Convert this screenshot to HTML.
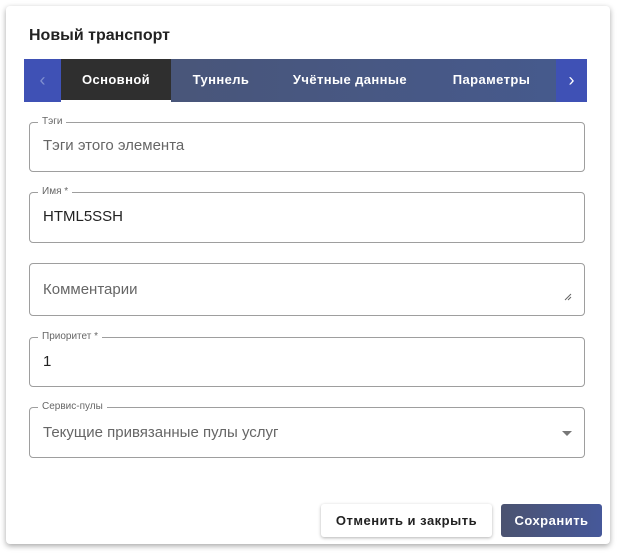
<!DOCTYPE html><html><head><style>
body{margin:0;width:623px;height:558px;background:#fff;font-family:"Liberation Sans",sans-serif;position:relative;overflow:hidden}
.card{position:absolute;left:6px;top:6px;width:604px;height:538px;background:#fff;border-radius:4px;box-shadow:0 2px 6px rgba(0,0,0,.35)}
.t{position:absolute;left:29px;top:27px;font-size:16px;font-weight:bold;color:#222}
.bar{position:absolute;left:24px;top:59px;width:563px;height:43px;background:linear-gradient(90deg,#4a5472,#465a8e)}
.arr{position:absolute;top:0;width:37px;height:43px;background:#3f51b5;color:#fff;font-size:18px;text-align:center;line-height:42px}
.tab{position:absolute;top:0;height:43px;line-height:42px;color:#fff;font-size:13px;font-weight:bold;text-align:center;letter-spacing:.4px}
.f{position:absolute;left:29px;width:556px;border:1px solid #9e9e9e;border-radius:4px;box-sizing:border-box}
.lb{position:absolute;left:8px;top:-7px;background:#fff;padding:0 4px;font-size:10px;color:#666}
.v{position:absolute;left:13px;font-size:15px;color:#666}
.btn{position:absolute;top:504px;height:33px;line-height:33px;text-align:center;font-size:13px;font-weight:bold;border-radius:3px;letter-spacing:.5px}
</style></head><body><div class="card"></div>
<div class="t">Новый транспорт</div>
<div class="bar">
<div class="arr" style="left:0;color:#8090d0">‹</div>
<div class="tab" style="left:37px;width:110px;background:#2f2f2f;border-bottom:2px solid #fff;height:41px">Основной</div>
<div class="tab" style="left:147px;width:100px">Туннель</div>
<div class="tab" style="left:247px;width:158px">Учётные данные</div>
<div class="tab" style="left:405px;width:125px">Параметры</div>
<div class="arr" style="left:532px;width:31px">›</div>
</div>
<div class="f" style="top:122px;height:50px"><span class="lb">Тэги</span><span class="v" style="top:14px">Тэги этого элемента</span></div>
<div class="f" style="top:192px;height:51px"><span class="lb">Имя *</span><span class="v" style="top:15px;color:#222">HTML5SSH</span></div>
<div class="f" style="top:263px;height:53px"><span class="v" style="top:17px">Комментарии</span><svg style="position:absolute;right:12px;bottom:14px" width="8" height="8"><path d="M1 7L7 1M4 7L7 4" stroke="#666" stroke-width="1"/></svg></div>
<div class="f" style="top:337px;height:50px"><span class="lb">Приоритет *</span><span class="v" style="top:15px;color:#222">1</span></div>
<div class="f" style="top:407px;height:51px"><span class="lb">Сервис-пулы</span><span class="v" style="top:16px">Текущие привязанные пулы услуг</span><span style="position:absolute;right:12px;top:23px;border:5px solid transparent;border-top-color:#777"></span></div>
<div class="btn" style="left:321px;width:171px;background:#fff;color:#222;box-shadow:0 1px 3px rgba(0,0,0,.3)">Отменить и закрыть</div>
<div class="btn" style="left:501px;width:101px;background:linear-gradient(90deg,#4b5370,#46589a);color:#fff">Сохранить</div>
</body></html>
